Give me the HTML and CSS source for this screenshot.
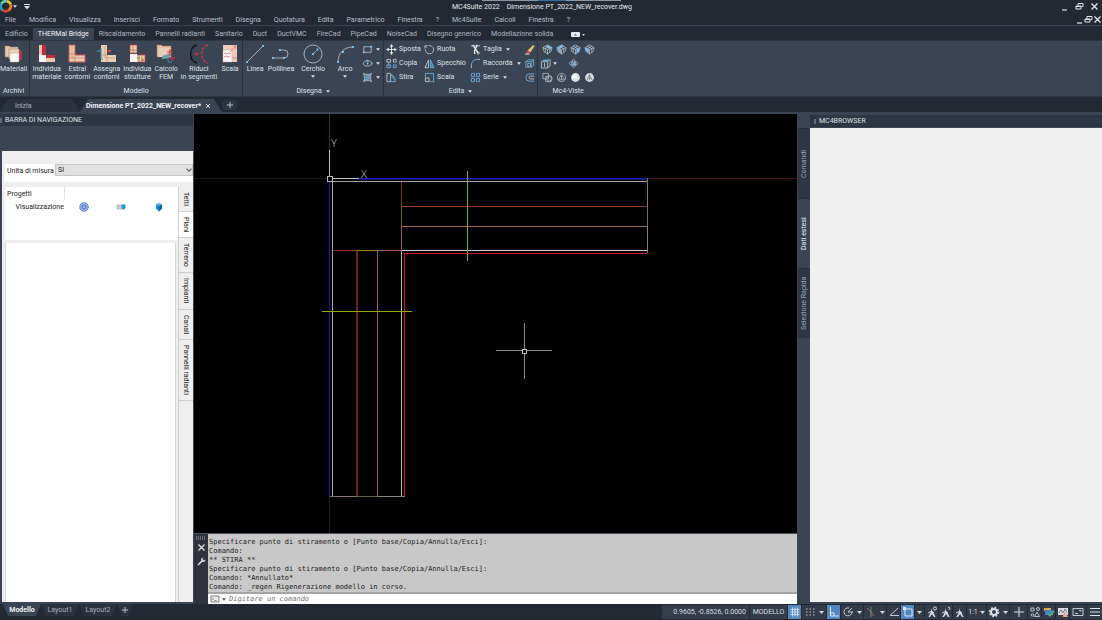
FILE: index.html
```html
<!DOCTYPE html>
<html lang="it">
<head>
<meta charset="utf-8">
<title>MC4Suite 2022 - Dimensione PT_2022_NEW_recover.dwg</title>
<link rel="stylesheet" href="styles.css">
</head>
<body>
<svg class="defs" aria-hidden="true">
  <symbol id="caret" viewBox="0 0 5 3"><path d="M0 0h5L2.500 3z" fill="currentColor"/></symbol>
  <symbol id="min" viewBox="0 0 9 9"><path d="M2 8h5" stroke="currentColor" stroke-width="1.200"/></symbol>
  <symbol id="restore" viewBox="0 0 9 9"><path d="M3 3.500V1.500h5v3H6.500M1 4h5v3H1zM1 4.500h5" fill="none" stroke="currentColor"/></symbol>
  <symbol id="close" viewBox="0 0 9 9"><path d="M1.500 1.500l6 6M7.500 1.500l-6 6" stroke="currentColor" stroke-width="1.300"/></symbol>
  <symbol id="cube" viewBox="0 0 12 12"><path d="M6 1l5 3-1 4-4 3-4-3-1-4z M1 4l5 2 5-2M6 6v5M3.500 2.500l5 2.500M8.500 2.500L3.500 5v4M8.500 5v4" fill="none" stroke="#bcc5cf" stroke-width=".8"/></symbol>
  <symbol id="person" viewBox="0 0 12 12"><path d="M5 2l1 3 1 .5L9.500 11H8L6 8l-2 3H2.500L5 5.500z" fill="currentColor"/><path d="M2 7l3-1.500L8 7" stroke="currentColor" fill="none"/></symbol>
</svg>
<div class="app">
  <header class="titlebar">
    <div class="quick">
      <svg class="logo" viewBox="0 0 14 14"><g fill="none" stroke-width="3"><path d="M1.500 4A5 5 0 0 1 7 1.500" stroke="#5cc8b0"/><path d="M7 1.500A5 5 0 0 1 11.500 5" stroke="#e8c13c"/><path d="M11.500 5A5.500 5.500 0 0 1 9 11" stroke="#ed7a30"/><path d="M9 11A5 5 0 0 1 3 11" stroke="#d94236"/><path d="M3 11A5 5 0 0 1 1.500 4" stroke="#2f9db3"/></g><circle cx="6.300" cy="6.500" r="3.600" fill="#222933"/></svg>
      <svg class="caret"><use href="#caret"/></svg>
      <button class="qbtn" aria-label="Personalizza"><svg viewBox="0 0 6 6"><path d="M0 .5h6" stroke="#dde1e6"/><path d="M0 2h6L3 5.500z" fill="#dde1e6"/></svg></button>
    </div>
    <h1><span>MC4Suite 2022</span><span>Dimensione PT_2022_NEW_recover.dwg</span></h1>
    <div class="winbtns"><button aria-label="Riduci"><svg><use href="#min"/></svg></button><button aria-label="Ripristina"><svg><use href="#restore"/></svg></button><button aria-label="Chiudi"><svg><use href="#close"/></svg></button></div>
    <div class="strip"><i></i></div>
  </header>
  <nav class="menubar">
    <button>File</button><button>Modifica</button><button>Visualizza</button><button>Inserisci</button><button>Formato</button><button>Strumenti</button><button>Disegna</button><button>Quotatura</button><button>Edita</button><button>Parametrico</button><button>Finestra</button><button>?</button><button>Mc4Suite</button><button>Calcoli</button><button>Finestra</button><button>?</button>
    <div class="docbtns"><button aria-label="Riduci documento"><svg><use href="#min"/></svg></button><button aria-label="Ripristina documento"><svg><use href="#restore"/></svg></button><button aria-label="Chiudi documento"><svg><use href="#close"/></svg></button></div>
  </nav>
  <nav class="tabs">
    <button>Edificio</button><button class="on">THERMal Bridge</button><button>Riscaldamento</button><button>Pannelli radianti</button><button>Sanitario</button><button>Duct</button><button>DuctVMC</button><button>FireCad</button><button>PipeCad</button><button>NoiseCad</button><button>Disegno generico</button><button>Modellazione solida</button>
    <button class="collapse" aria-label="Riduci barra"><svg viewBox="0 0 14 5"><rect width="9" height="5" rx="1" fill="#e9ebee"/><path d="M3 3.500h3L4.500 1.500z" fill="#59616c"/><path d="M11 2h3l-1.500 2z" fill="#d0d5da"/></svg></button>
  </nav>
  <section class="ribbon">
    <div class="panel archivi">
      <div class="tools">
        <button class="big"><svg viewBox="0 0 20 20"><path d="M1 2h4l1 1h8v10H1z" fill="#e5c5a8" stroke="#a08066" stroke-width=".5"/><path d="M5 6h12v9H5z" fill="#c0394a"/><path d="M5 5h10v10H5z" fill="#eccfb9" stroke="#9c7f6c" stroke-width=".5"/><path d="M15 7h3v9h-9v-1h6z" fill="#b4313f"/><path d="M6 9h9v9H6z" fill="#f8f8f8" stroke="#b7a9a3" stroke-width=".5"/></svg>Materiali</button>
      </div>
      <h2>Archivi</h2>
    </div>
    <div class="panel modello">
      <div class="tools">
        <button class="big"><svg viewBox="0 0 20 20"><path d="M2 1h4v10H2z" fill="#e9c9ad"/><path d="M5 1h4v11H5zM8 11h10v3H8z" fill="#c62b38"/><path d="M9 14h9v4H9z" fill="#e9c9ad"/><path d="M2 11h7v7H2z" fill="#f6f6f6"/></svg>Individua<br>materiale</button>
        <button class="big"><svg viewBox="0 0 20 20"><path d="M2 1h6v10h10v7H2z" fill="#ebcdb4" stroke="#cf5558"/><path d="M5 2v12h13M2 10h6v8M2 14h5" fill="none" stroke="#c38470" stroke-width=".7"/></svg>Estrai<br>contorni</button>
        <button class="big"><svg viewBox="0 0 20 20"><path d="M4 1h6v10h9v7H4z" fill="#ebcdb4"/><path d="M8 2v12h11M4 11h6v7" fill="none" stroke="#b89580" stroke-width=".7"/><path d="M0 7h5M4 4v11h2" stroke="#359dab" fill="none"/><path d="M10 7h4" stroke="#c83e43" stroke-width="1.500"/><path d="M12 5l2 2-2 2" fill="#d44"/></svg>Assegna<br>contorni</button>
        <button class="big"><svg viewBox="0 0 20 20"><path d="M3 1h7v8H3zM9 11h9v7H9z" fill="#edceb5" stroke="#c0434d" stroke-width=".7"/><path d="M6 1v9M3 6h7M12 11v7M15 11v7" stroke="#b47b5a" stroke-width=".8"/><path d="M3 10h7v8H3z" fill="#f7f7f7"/><path d="M10 14h3M14 16h3" stroke="#aa9750" stroke-width="2"/></svg>Individua<br>strutture</button>
        <button class="big"><svg viewBox="0 0 20 20"><path d="M1 1h4l1 1h9v11H1z" fill="#e2c19e" stroke="#a57f64" stroke-width=".5"/><path d="M3 4h12v9H3z" fill="#eccbb7"/><path d="M6 12l8-3v5l-8 1z" fill="#71a0ac"/><path d="M12 14v4h4" stroke="#2e8ca0" fill="none"/><path d="M14 5v7M11 8h6M16 13v4M13 14h6" stroke="#d83340" stroke-width="1.200"/></svg>Calcolo<br>FEM</button>
        <button class="big"><svg viewBox="0 0 20 20"><path d="M8 1C-.5 3-.5 17 8 19" fill="none" stroke="#11151a" stroke-width="1.300"/><path d="M19 1C10.500 3 10.500 17 19 19" fill="none" stroke="#df3140" stroke-width="1.300" stroke-dasharray="3 1.500"/><path d="M5 10h4M7.500 8.500L9 10l-1.500 1.500" stroke="#df3140" fill="none"/></svg>Riduci<br>in segmenti</button>
        <button class="big"><svg viewBox="0 0 20 20"><path d="M3 1h14v17H3z" fill="#f0c9b8"/><path d="M3 6h9v12H3z" fill="#fafafa" stroke="#d3a798" stroke-width=".5"/><path d="M10 8l6-6M13 2h3v3M4 10l1-1 2 1 2-1 2 1M4 13l2-1 2 1 2-1M12 14h5" fill="none" stroke="#db7164" stroke-width=".8"/></svg>Scala</button>
      </div>
      <h2>Modello</h2>
    </div>
    <div class="panel disegna">
      <div class="tools">
        <button class="big"><svg viewBox="0 0 20 20"><path d="M2 18L18 2" stroke="#c0c8d0" stroke-width=".8"/><path d="M1 17h2v2H1zM17 1h2v2h-2z" fill="#77baf0"/></svg>Linea</button>
        <button class="big"><svg viewBox="0 0 20 20"><path d="M2 14h11a4 4 0 0 0 0-8H9" stroke="#c0c8d0" stroke-width=".8" fill="none"/><path d="M1 13h2v2H1zM12 13h2v2h-2zM8 5h2v2H8z" fill="#77baf0"/></svg>Polilinea</button>
        <button class="big"><svg viewBox="0 0 20 20"><circle cx="10" cy="10" r="9" stroke="#c0c8d0" stroke-width=".8" fill="none"/><path d="M10 10l4-4" stroke="#77baf0" stroke-width=".8"/><path d="M9 9h2v2H9zM13.500 4.500h2v2h-2z" fill="#77baf0"/></svg>Cerchio<svg class="caret"><use href="#caret"/></svg></button>
        <button class="big"><svg viewBox="0 0 20 20"><path d="M3 18C3 9 9 3 18 3" stroke="#c0c8d0" stroke-width=".8" fill="none"/><path d="M2 17h2v2H2zM7 7h2v2H7zM17 2h2v2h-2z" fill="#77baf0"/></svg>Arco<svg class="caret"><use href="#caret"/></svg></button>
        <div class="shapes">
          <button aria-label="Rettangolo"><svg class="ic" viewBox="0 0 12 12"><path d="M2 3h8v6H2z" fill="none" stroke="#bcc5cf" stroke-width=".9"/><path d="M1 8h2v2H1zM9 2h2v2H9z" fill="#77baf0"/></svg><svg class="caret"><use href="#caret"/></svg></button>
          <button aria-label="Ellisse"><svg class="ic" viewBox="0 0 12 12"><ellipse cx="6" cy="6" rx="4.500" ry="2.800" fill="none" stroke="#bcc5cf" stroke-width=".9"/><path d="M5 5h2v2H5zM10 5h1.500v2H10zM5 2h2v1.500H5z" fill="#77baf0"/></svg><svg class="caret"><use href="#caret"/></svg></button>
          <button aria-label="Tratteggio"><svg class="ic" viewBox="0 0 12 12"><path d="M2.500 2.500h7v7h-7z" fill="#647c93" stroke="#bcc5cf" stroke-width=".8"/><path d="M3 7l4-4M3 9l6-6M5 9l4-4" stroke="#77baf0" stroke-width=".8"/><path d="M1 2h2M2 1v2M9 10h2M10 9v2M9 2h2M10 1v2M1 10h2M2 9v2" stroke="#bcc5cf" stroke-width=".7"/></svg><svg class="caret"><use href="#caret"/></svg></button>
        </div>
      </div>
      <h2>Disegna <svg class="caret"><use href="#caret"/></svg></h2>
    </div>
    <div class="panel edita">
      <div class="tools">
        <button class="cmd"><svg class="ic" viewBox="0 0 12 12"><path d="M2 6h8M6 2v8" stroke="#e7eaee"/><path d="M6 0l2 3H4zM6 12l2-3H4zM0 6l3-2v4zM12 6L9 4v4z" fill="#e7eaee"/></svg>Sposta</button>
        <button class="cmd"><svg class="ic" viewBox="0 0 12 12"><path d="M8 2H11V5M10.500 2.500L9 4M7 1.800A4.500 4.500 0 1 0 10.500 6" fill="none" stroke="#b9c1ca" transform="matrix(-1 0 0 1 12 0)"/></svg>Ruota</button>
        <button class="cmd"><svg class="ic" viewBox="0 0 12 12"><path d="M1 2h10" stroke="#bcc5cf"/><path d="M3 1l4 6 2 3M8 1L5 7v4" stroke="#e7eaee" stroke-width="1.500" fill="none"/><circle cx="9" cy="10" r="1.300" fill="none" stroke="#e7eaee" stroke-width=".7"/></svg>Taglia<svg class="caret"><use href="#caret"/></svg></button>
        <button class="cmd" aria-label="Cancella"><svg class="ic" viewBox="0 0 12 12"><path d="M10 1l1.500 1.500L7 9 4 7z" fill="#e6c56c"/><path d="M4 7l3 2-2 2H2z" fill="#d94b55"/><path d="M1 11h5" stroke="#efefef"/></svg></button>
        <button class="cmd"><svg class="ic" viewBox="0 0 12 12"><path d="M1 1.500h4v3H1zM8 1.500h3v3H8z" fill="none" stroke="#bcc5cf"/><path d="M3 4.500V9M1 7.500h4v3H1zM8 7.500h3v3H8z" fill="none" stroke="#68acd9"/></svg>Copia</button>
        <button class="cmd"><svg class="ic" viewBox="0 0 12 12"><path d="M5 2v8.500H1z" fill="none" stroke="#bcc5cf"/><path d="M7 2v8.500h4z" fill="#457dad" stroke="#68acd9"/></svg>Specchio</button>
        <button class="cmd"><svg class="ic" viewBox="0 0 12 12"><path d="M1.500 11V7" stroke="#bcc5cf"/><path d="M1.500 7C2 4 4 1.500 8 1.500" fill="none" stroke="#68acd9"/><path d="M8 1.500h3" stroke="#bcc5cf"/></svg>Raccorda<svg class="caret"><use href="#caret"/></svg></button>
        <button class="cmd" aria-label="Esplodi"><svg class="ic" viewBox="0 0 12 12"><path d="M2 4h6v6H2zM2 4l2-2h6.500v6L8 10M8 4l2.500-2" fill="none" stroke="#68acd9"/><path d="M4 6h3v3H4z" fill="none" stroke="#bcc5cf" stroke-width=".7"/></svg></button>
        <button class="cmd"><svg class="ic" viewBox="0 0 12 12"><path d="M1 1.500h4v9H1z" fill="none" stroke="#bcc5cf"/><path d="M5 2l5.500 8.500H4M7 3l4 6" fill="none" stroke="#68acd9"/></svg>Stira</button>
        <button class="cmd"><svg class="ic" viewBox="0 0 12 12"><path d="M1.500 6V1.500h9v9H6" fill="none" stroke="#68acd9"/><path d="M1.500 6.500h4v4h-4z" fill="none" stroke="#bcc5cf"/></svg>Scala</button>
        <button class="cmd"><svg class="ic" viewBox="0 0 12 12"><g fill="none" stroke="#68acd9"><path d="M1.500 1.500h3.500v3.500H1.500zM7 1.500h3.500v3.500H7zM1.500 7h3.500v3.500H1.500zM7 7h3.500v3.500H7z"/></g></svg>Serie<svg class="caret"><use href="#caret"/></svg></button>
        <button class="cmd" aria-label="Offset"><svg class="ic" viewBox="0 0 12 12"><path d="M11 2H6a4 4 0 0 0 0 8h5" fill="none" stroke="#68acd9"/><path d="M11 4.500H7a1.500 1.500 0 0 0 0 3h4" fill="none" stroke="#bcc5cf"/></svg></button>
      </div>
      <h2>Edita <svg class="caret"><use href="#caret"/></svg></h2>
    </div>
    <div class="panel viste">
      <div class="tools">
        <button aria-label="Vista SO"><svg class="ic" viewBox="0 0 12 12"><use href="#cube"/><path d="M6 1l4.500 3L9 6 5 3z" fill="#77baf0"/></svg></button>
        <button aria-label="Vista SE"><svg class="ic" viewBox="0 0 12 12"><use href="#cube"/><path d="M1.500 4l4 2.500V10L3 8z" fill="#77baf0"/><path d="M6 1L2 4l3 1 3-3z" fill="#77baf0"/></svg></button>
        <button aria-label="Vista NE"><svg class="ic" viewBox="0 0 12 12"><use href="#cube"/><path d="M7 6l4-2-1 4-3 3z" fill="#77baf0"/></svg></button>
        <button aria-label="Vista NO"><svg class="ic" viewBox="0 0 12 12"><use href="#cube"/><path d="M1 4l4 1 1 5-3-2z" fill="#77baf0"/></svg></button>
        <button class="wide" aria-label="Viste"><svg class="ic" viewBox="0 0 12 12"><path d="M1.500 4h7v7h-7z" fill="none" stroke="#bcc5cf"/><path d="M1.500 4L4 1.500h7L8.500 4z" fill="#68acd9"/><path d="M11 1.500v7L8.500 11M5 5v5" fill="none" stroke="#bcc5cf"/></svg><svg class="caret"><use href="#caret"/></svg></button>
        <button class="orbit" aria-label="Orbita"><svg class="ic" viewBox="0 0 12 12"><g fill="none" stroke="#bcc5cf" stroke-width=".8"><ellipse cx="6" cy="6" rx="2" ry="4.500"/><ellipse cx="6" cy="6" rx="4.500" ry="2"/></g><path d="M5 5h3v3H5z" fill="#77baf0"/></svg></button>
        <button aria-label="Wireframe"><svg class="ic" viewBox="0 0 12 12"><path d="M1 1.500h6v6H1zM4 5h6v5.500H4z" fill="none" stroke="#bcc5cf" stroke-width=".8"/><circle cx="8" cy="7" r="3" fill="none" stroke="#bcc5cf" stroke-width=".8"/></svg></button>
        <button aria-label="Nascosto"><svg class="ic" viewBox="0 0 12 12"><circle cx="6" cy="6" r="4.500" fill="none" stroke="#bcc5cf" stroke-width=".8"/><path d="M6 3L2.500 8.500h7zM6 3v5.500" fill="none" stroke="#bcc5cf" stroke-width=".8"/></svg></button>
        <button aria-label="Realistico"><svg class="ic" viewBox="0 0 12 12"><circle cx="6" cy="6" r="4.800" fill="#dfe1e2"/><circle cx="5" cy="5" r="2.500" fill="#f5f5f3"/></svg></button>
        <button aria-label="Ombreggiato"><svg class="ic" viewBox="0 0 12 12"><circle cx="6" cy="6" r="4.800" fill="#dcdfe2"/><path d="M6 2.500L3 9M6 2.500L9 9M4 7h4M6 3v6" stroke="#7c8691" stroke-width=".9" fill="none"/></svg></button>
      </div>
      <h2>Mc4-Viste</h2>
    </div>
  </section>
  <nav class="doctabs">
    <button class="doc">Inizia</button>
    <button class="doc on">Dimensione PT_2022_NEW_recover* <svg class="x"><use href="#close"/></svg></button>
    <button class="plus" aria-label="Nuovo disegno"><svg viewBox="0 0 6 6"><path d="M3 0v6M0 3h6" stroke="#b9c0c9"/></svg></button>
  </nav>
  <main>
    <aside class="navbar">
      <h3>BARRA DI NAVIGAZIONE</h3>
      <div class="navbody">
        <div class="unit"><label for="um">Unita di misura</label><select id="um"><option>SI</option></select></div>
        <div class="navcols">
          <div class="lists">
            <table>
              <thead><tr><th>Progetti</th><td colspan="3"></td></tr></thead>
              <tbody><tr><td class="name">Visualizzazione</td>
                <td><svg viewBox="0 0 10 10"><circle cx="5" cy="5" r="4.300" fill="#9ab3e8" stroke="#3c62b8" stroke-dasharray="1.500 .6"/><circle cx="5" cy="5" r="2" fill="none" stroke="#4468b8" stroke-width=".8"/></svg></td>
                <td><svg viewBox="0 0 10 10"><path d="M1 3h5v4H1zM2 5h3" fill="#dfe2e5" stroke="#98a2ab" stroke-width=".7"/><path d="M7.500 2l2 1v3l-2 2-2-2V3z" fill="#219bd6"/></svg></td>
                <td><svg viewBox="0 0 10 10"><path d="M5 1l3 1.500v4L5 9.500 2 6.500v-4z" fill="#168bc8"/><path d="M5 1l3 1.500L5 4 2 2.500z" fill="#54c2ee"/><path d="M5 4l3-1.500v4L5 9.500z" fill="#0c6ca5"/></svg></td></tr></tbody>
            </table>
            <div class="blank"></div>
          </div>
          <div class="vtabs"><button>Tetti</button><button class="on">Piani</button><button>Terreno</button><button>Impianti</button><button>Canali</button><button>Pannelli radianti</button></div>
        </div>
      </div>
    </aside>
    <section class="work">
      <svg class="canvas" shape-rendering="crispEdges" fill="none">
        <path d="M0 64.500h135" stroke="#15151c"/>
        <path d="M453 64.500h600" stroke="#4a1010"/>
        <path d="M135.500 0v36" stroke="#164018"/>
        <path d="M135.500 382v300" stroke="#1d1d1d"/>
        <path d="M165 64.500h288" stroke="#1c1ccc"/>
        <path d="M165 65.500h288" stroke="#141460"/>
        <path d="M135.500 67v315" stroke="#20189c"/>
        <path d="M136 67.500h317" stroke="#a6a09e"/>
        <path d="M138.500 67v315" stroke="#b4a2a2"/>
        <path d="M207.500 68v24" stroke="#8c2626"/><path d="M207.500 92v20" stroke="#70740f"/><path d="M207.500 112v24" stroke="#a05656"/>
        <path d="M208 92.500h245" stroke="#8f4122"/><path d="M208 112.500h245" stroke="#a06a48"/>
        <path d="M453.500 64v28" stroke="#8a7272"/><path d="M453.500 92v20" stroke="#6c7150"/><path d="M453.500 112v27" stroke="#8f7c7c"/>
        <path d="M139 136.500h24" stroke="#9a2a2a"/><path d="M163 136.500h20" stroke="#8b8b12"/><path d="M183 136.500h25" stroke="#a65c5c"/><path d="M208 136.500h245" stroke="#d6cccc"/>
        <path d="M210 139.500h243M210.500 139v243" stroke="#cc1a1a"/>
        <path d="M163 137v245" stroke="#6a2a12" stroke-width="2"/><path d="M183.500 137v245" stroke="#96694e"/><path d="M207.500 137v245" stroke="#c4b4b4"/>
        <path d="M136 382.500h29" stroke="#887070"/><path d="M163 382.500h20" stroke="#59613e"/><path d="M183 382.500h28" stroke="#8a8080"/>
        <path d="M273.500 57v90M128 197.500h90" stroke="#93a80c"/>
        <path d="M135.500 36v26M138 64.500h27" stroke="#c4c4cc"/><path d="M133.500 62.500h5v5h-5z" stroke="#b6b6b6"/>
        <path d="M330.500 209v26M330.500 240v25M302 236.500h26M333 236.500h25" stroke="#8a8a8a"/><path d="M328.500 235.500h4v4h-4z" stroke="#c0c0c0"/>
        <text x="140" y="33">Y</text><text x="170" y="64">X</text>
      </svg>
      <div class="console">
        <div class="grip">
          <svg viewBox="0 0 12 4"><path d="M1 1h10M1 3h10" stroke="#a3aab3" stroke-dasharray="1 1"/></svg>
          <button aria-label="Chiudi riga di comando"><svg><use href="#close"/></svg></button>
          <button aria-label="Opzioni"><svg viewBox="0 0 9 9"><path d="M1 8l4-4" stroke="#dde1e6" stroke-width="1.600"/><path d="M8.500 2.500a2.200 2.200 0 1 1-2-2L5.500 2l1.500 1.500z" fill="#dde1e6"/></svg></button>
        </div>
        <div class="log">
          <pre>Specificare punto di stiramento o [Punto base/Copia/Annulla/Esci]:
Comando:
** STIRA **
Specificare punto di stiramento o [Punto base/Copia/Annulla/Esci]:
Comando: *Annullato*
Comando: _regen Rigenerazione modello in corso.</pre>
          <div class="prompt"><svg class="term" viewBox="0 0 9 8"><path d="M.5 1h8v6h-8z" fill="#eee" stroke="#666" stroke-width=".8"/><path d="M2 3l1 1-1 1M4 5.500h2" stroke="#555" stroke-width=".7" fill="none"/></svg><svg class="caret"><use href="#caret"/></svg><input aria-label="Comando" placeholder="Digitare un comando"></div>
        </div>
      </div>
    </section>
    <aside class="browser">
      <div class="sidetabs"><button>Comandi</button><button class="on">Dati estesi</button><button>Selezione Rapida</button></div>
      <div class="bpanel"><h3>MC4BROWSER</h3><div class="bbody"></div></div>
    </aside>
  </main>
  <footer>
    <nav class="layouts"><button class="on">Modello</button><button>Layout1</button><button>Layout2</button><button class="add" aria-label="Nuovo layout"><svg viewBox="0 0 6 6"><path d="M3 0v6M0 3h6" stroke="#b9c0c9"/></svg></button></nav>
    <div class="status">
      <span class="coords">0.9605, -0.8526, 0.0000</span>
      <button class="model">MODELLO</button>
      <button class="lit" aria-label="Griglia"><svg viewBox="0 0 12 12"><path d="M3.500 1.500v9M6 1.500v9M8.500 1.500v9M1.500 3.500h9M1.500 6h9M1.500 8.500h9" stroke="#dfeaf5" stroke-width=".8"/></svg></button>
      <button class="drop snap" aria-label="Snap"><svg viewBox="0 0 12 12"><path d="M2 3h9M2 6h9M2 9h9" stroke="#bfc5cc" stroke-dasharray="1.500 2"/></svg><svg class="caret"><use href="#caret"/></svg></button>
      <button class="lit" aria-label="Orto"><svg viewBox="0 0 12 12"><path d="M2.500 1v9H11M3 7h3v3" stroke="#dfeaf5" fill="none"/></svg></button>
      <button class="drop" aria-label="Polare"><svg viewBox="0 0 12 12"><path d="M10 6a4 4 0 1 1-3-4M6 6h5M6 6l4-4" stroke="#c5cbd2" fill="none"/></svg><svg class="caret"><use href="#caret"/></svg></button>
      <button class="drop" aria-label="Assonometria"><svg viewBox="0 0 12 12"><path d="M6 1v10" stroke="#4f9f62"/><path d="M2 2l4 4 3 4" stroke="#c05560" fill="none"/></svg><svg class="caret"><use href="#caret"/></svg></button>
      <button aria-label="Puntamento"><svg viewBox="0 0 12 12"><path d="M10 2L2 9.500h9" stroke="#c5cbd2" fill="none"/></svg></button>
      <button class="lit" aria-label="Osnap"><svg viewBox="0 0 12 12"><path d="M3 3h7v7H3z" stroke="#dfeaf5" fill="none"/><path d="M1 1h3v3H1z" fill="#dfeaf5"/></svg></button>
      <button class="slim" aria-label="Opzioni osnap"><svg class="caret"><use href="#caret"/></svg></button>
      <button aria-label="Visibilità annotazioni"><svg viewBox="0 0 12 12"><use href="#person"/><circle cx="9" cy="2.500" r="1.500" fill="none" stroke="currentColor"/></svg></button>
      <button aria-label="Scala automatica"><svg viewBox="0 0 12 12"><use href="#person"/><path d="M8 1l2 1-1 2" stroke="currentColor" fill="none"/></svg></button>
      <button aria-label="Scala annotazione"><svg viewBox="0 0 12 12"><use href="#person"/></svg></button>
      <button class="scale">1:1<svg class="caret"><use href="#caret"/></svg></button>
      <button class="drop" aria-label="Area di lavoro"><svg viewBox="0 0 12 12"><circle cx="6" cy="6" r="3" fill="none" stroke="#dfe3e8" stroke-width="2"/><circle cx="6" cy="6" r="4.600" fill="none" stroke="#dfe3e8" stroke-width="1.200" stroke-dasharray="1.800 1.800"/></svg><svg class="caret"><use href="#caret"/></svg></button>
      <button class="add" aria-label="Aggiungi"><svg viewBox="0 0 12 12"><path d="M6 1v10M1 6h10" stroke="#dfe3e8"/></svg></button>
      <button aria-label="Isola"><svg viewBox="0 0 12 12"><path d="M2 2h3v3H2zM8 6l-2.500 4.500h5z" stroke="#c5cbd2" fill="none" stroke-width=".9"/><circle cx="9" cy="3" r="1.500" stroke="#c5cbd2" fill="none" stroke-width=".9"/><circle cx="3.500" cy="9" r="1.300" stroke="#c5cbd2" fill="none" stroke-width=".9"/></svg></button>
      <button aria-label="Prestazioni"><svg viewBox="0 0 12 12"><path d="M1 2h7v3H1z" fill="#dba94a"/><path d="M2 4h8v5H2z" fill="#4685ca"/><path d="M5 8l2 2 4-5" stroke="#58ba62" stroke-width="1.500" fill="none"/></svg></button>
      <button aria-label="Monitor"><svg viewBox="0 0 12 12"><path d="M1 2h10v7H1z" fill="#d7dbe0"/><path d="M2 7l2-3 2 3 2-4 2 3" stroke="#71808f" fill="none"/><path d="M8 5l3 6H5.500z" fill="#e4a98b"/></svg></button>
      <button aria-label="Schermo pulito" class="screen"><svg viewBox="0 0 12 12"><path d="M1 2.500h10v7H1zM3 7.500h3M7 4.500h2v1" stroke="#c5cbd2" fill="none"/></svg></button>
      <button class="custom" aria-label="Personalizzazione"><svg viewBox="0 0 12 12"><path d="M1 2.500h10M1 6h10M1 9.500h10" stroke="#dfe3e8"/></svg></button>
    </div>
  </footer>
</div>
</body>
</html>
```
FILE: styles.css
```css
* { box-sizing: border-box; }
body {
  margin: 0;
  background: #222933;
  color: #dde1e6;
  font: 7px/8px Roboto, "Open Sans", "Liberation Sans", sans-serif;
}
button {
  margin: 0; padding: 0; border: 0;
  background: none; color: inherit; font: inherit;
  display: flex; align-items: center; justify-content: center;
  white-space: nowrap;
}
h1, h2, h3, pre { margin: 0; font-size: inherit; font-weight: 400; }
svg { display: block; flex: none; }
.defs { position: absolute; width: 0; height: 0; }
.caret { width: 4px; height: 3px; }
.ic { width: 12px; height: 12px; }
.app { height: 100vh; display: flex; flex-direction: column; overflow: hidden; }

.titlebar { position: relative; display: flex; align-items: center; height: 13px; flex: none; }
.quick { display: flex; align-items: center; gap: 0; width: 40px; }
.logo { width: 13px; height: 13px; }
.qbtn { margin-left: 7px; }
.qbtn svg { width: 6px; height: 6px; }
.titlebar h1 { flex: 1; display: flex; justify-content: center; gap: 7px; padding-right: 18px; color: #e6e9ec; }
.winbtns { display: flex; gap: 6px; padding-right: 3px; width: 40px; justify-content: flex-end; }
.winbtns svg, .docbtns svg { width: 9px; height: 9px; color: #e4e7ea; }
.strip { position: absolute; top: 0; left: 0; right: 0; margin: auto; width: 139px; height: 1px; background: #8f969d; }
.strip i { display: block; width: 28px; height: 1px; margin-left: 56px; background: #2f6fb5; }

.menubar { display: flex; gap: 13px; height: 13px; flex: none; padding: 1px 0 0 5px; border-bottom: 1px solid #373f4b; color: #b9bfc7; }
.docbtns { display: flex; gap: 0; margin-left: auto; }

.tabs { display: flex; height: 14px; flex: none; padding-top: 2px; color: #b0b6be; }
.tabs button { padding: 0 5px; }
.tabs .on { background: #3b4453; color: #f0f2f4; }
.tabs .collapse { margin-left: 8px; }
.collapse svg { width: 14px; height: 5px; }

.ribbon { display: flex; flex: none; background: #3b4453; height: 57px; border-bottom: 1px solid #2c343f; border-top: 1px solid #2f3743; }
.panel { display: flex; flex-direction: column; justify-content: space-between; border-right: 1px solid #2a323d; padding: 3px 2px 1px; }
.panel h2 { display: flex; justify-content: center; align-items: center; gap: 4px; }
.panel:last-child { border: 0; }
.tools { display: flex; gap: 3px; }
.big { flex-direction: column; justify-content: flex-start; text-align: center; }
.big > svg:first-child { width: 20px; height: 20px; margin-bottom: 1px; }
.big .caret { margin-top: 2px; }
.panel.archivi { padding-left: 0; }
.archivi .tools { justify-content: center; }
.disegna .tools { display: grid; grid-template-columns: 20px 32px 32px 32px 20px; gap: 0; align-items: start; }
.panel.disegna, .panel.edita, .panel.viste { padding-top: 1px; }
.disegna .big { padding-top: 2px; }
.shapes { display: grid; grid-auto-rows: 14px; }
.shapes button { gap: 3px; }
.edita .tools { display: grid; grid-template-columns: 38px 46px 54px 11px; grid-auto-rows: 14px; gap: 0; }
.cmd { justify-content: flex-start; gap: 2px; }
.cmd .caret { margin-left: 2px; }
.cmd .ic, .shapes .ic, .viste .ic { width: 11px; height: 11px; }
.viste .tools { display: grid; grid-template-columns: repeat(4, 14px); grid-auto-rows: 14px; gap: 0; }
.wide { grid-column: span 2; gap: 2px; justify-content: flex-start; }
.orbit { grid-column: span 2; justify-content: flex-start; }

.doctabs { display: flex; height: 16px; flex: none; padding-top: 2px; border-bottom: 1px solid #3b4453; }
.doc { background: #2b323d; color: #b0b6be; clip-path: polygon(8px 0, calc(100% - 8px) 0, 100% 100%, 0 100%); width: 80px; padding-left: 15px; justify-content: flex-start; }
.doc.on { width: 142px; padding-left: 6px; gap: 4px; font-weight: 700; background: #3b4453; color: #f0f2f4; }
.x { width: 6px; height: 6px; }
.plus { width: 15px; margin: 1px 0 2px; background: #2d3541; border-radius: 4px; }
.plus svg, .layouts .add svg { width: 6px; height: 6px; }

main { display: flex; flex: 1; min-height: 0; background: #3b4453; padding-top: 1px; }
h3 { height: 12px; padding: 2px 5px; background: #2f3643; }
h3::before { content: ""; float: left; width: 2px; height: 5px; margin: 2px 3px 0 -5px; background: #626a76; }
.navbar { width: 194px; flex: none; display: flex; flex-direction: column; padding: 0 1px 2px 0; }
.navbody { flex: 1; display: flex; flex-direction: column; margin: 25px 0 0 2px; padding-top: 13px; background: #efefef; color: #222; }
.unit { position: relative; display: flex; margin-left: 3px; background: #fff; height: 18px; }
.unit label { width: 50px; padding: 3px 0 0 2px; white-space: nowrap; }
.unit select { flex: 1; height: 12px; margin: 0; padding: 0 2px; border: 1px solid #c6c6c6; border-radius: 0; background: #e1e1e1; color: #222; font: inherit; appearance: none; }
.unit::after { content: ""; position: absolute; right: 2px; top: 3px; width: 3px; height: 3px; border: solid #555; border-width: 0 1px 1px 0; transform: rotate(45deg); }
.navcols { display: flex; flex: 1; margin: 5px 0 0 3px; min-height: 0; }
.lists { flex: 1; display: flex; flex-direction: column; gap: 3px; }
.lists table { display: block; height: 53px; background: #fff; border-collapse: collapse; }
th, td { padding: 0; font-weight: 400; text-align: left; width: 38px; height: 13px; }
th { width: 60px; padding-left: 2px; border-right: 1px solid #e4e4e4; }
.name { text-align: right; padding-right: 1px; }
tbody td svg { width: 10px; height: 10px; margin: 1px auto; }
.blank { flex: 1; margin-right: 2px; background: #fff; border: solid #d8d8d8; border-width: 0 1px; }
.vtabs { width: 15px; border-left: 1px solid #cfcfcf; }
.vtabs button { width: 100%; padding: 5px 0; writing-mode: vertical-rl; border-bottom: 1px solid #cfcfcf; }
.vtabs .on { background: #fff; }

.work { flex: 1; min-width: 0; display: flex; flex-direction: column; }
.canvas { flex: 1; width: 100%; min-height: 0; background: #000; }
.canvas text { font: 300 11px "Open Sans", sans-serif; fill: #c4c4c4; text-anchor: middle; }
.console { display: flex; flex: none; background: #2d3440; border-top: 1px solid #4b535f; }
.grip { width: 14px; display: flex; flex-direction: column; align-items: center; gap: 5px; padding-top: 2px; color: #dde1e6; }
.grip svg { width: 9px; height: 9px; }
.grip > svg { width: 12px; height: 4px; }
.grip button:first-of-type { margin-top: -2px; }
.log { flex: 1; background: #c8c8c8; color: #1c1c1c; min-width: 0; }
.log pre, .prompt input { font: 7px/9px "DejaVu Sans Mono", "Liberation Mono", monospace; }
.log pre { padding: 4px 1px 0; border-bottom: 2px solid #a6a6a6; }
.prompt { display: flex; align-items: center; gap: 2px; height: 10px; padding-left: 2px; background: #fff; color: #555; }
.prompt input { flex: 1; border: 0; padding: 0 1px; background: none; }
.prompt input::placeholder { color: #777; font-style: italic; opacity: 1; }
.term { width: 10px; height: 8px; }

.browser { width: 305px; flex: none; display: flex; padding-top: 1px; }
.sidetabs { width: 13px; padding: 13px 0 0 1px; }
.sidetabs button { width: 12px; height: 70px; writing-mode: vertical-rl; transform: rotate(180deg); background: #2f3643; color: #9da4ae; border-radius: 0 2px 2px 0; border-bottom: 1px solid #262d37; }
.sidetabs .on { background: #3b4453; color: #eceef1; }
.bpanel { flex: 1; display: flex; flex-direction: column; padding-bottom: 2px; }
.bpanel h3 { padding-left: 9px; }
.bbody { flex: 1; background: #efefef; margin-top: 1px; }

footer { display: flex; justify-content: space-between; flex: none; height: 16px; }
.layouts { display: flex; height: 12px; padding-left: 3px; color: #a9b0b9; }
.layouts button { width: 38px; background: #2b323d; clip-path: polygon(0 0, 100% 0, calc(100% - 5px) 100%, 5px 100%); }
.layouts .on { background: #3b4453; color: #f0f2f4; font-weight: 700; }
.layouts .add { width: 16px; }
.status { display: flex; gap: 1px; padding-top: 1px; height: 15px; color: #d8dce1; }
.status > * { background: #343c49; width: 13px; }
.status svg { width: 12px; height: 12px; }
.status svg.caret { width: 5px; height: 3px; }
.status .coords { width: 87px; padding: 3px 3px 0 0; text-align: right; white-space: nowrap; }
.status .model { width: 37px; }
.status .drop { width: 22px; gap: 3px; }
.status .snap { width: 24px; }
.status .slim { width: 9px; }
.status .lit { background: #5487c0; }
.status .scale { width: 19px; gap: 2px; }
.status .add { width: 17px; }
.status .screen { width: 16px; }
.status .custom { width: 15px; }
```
